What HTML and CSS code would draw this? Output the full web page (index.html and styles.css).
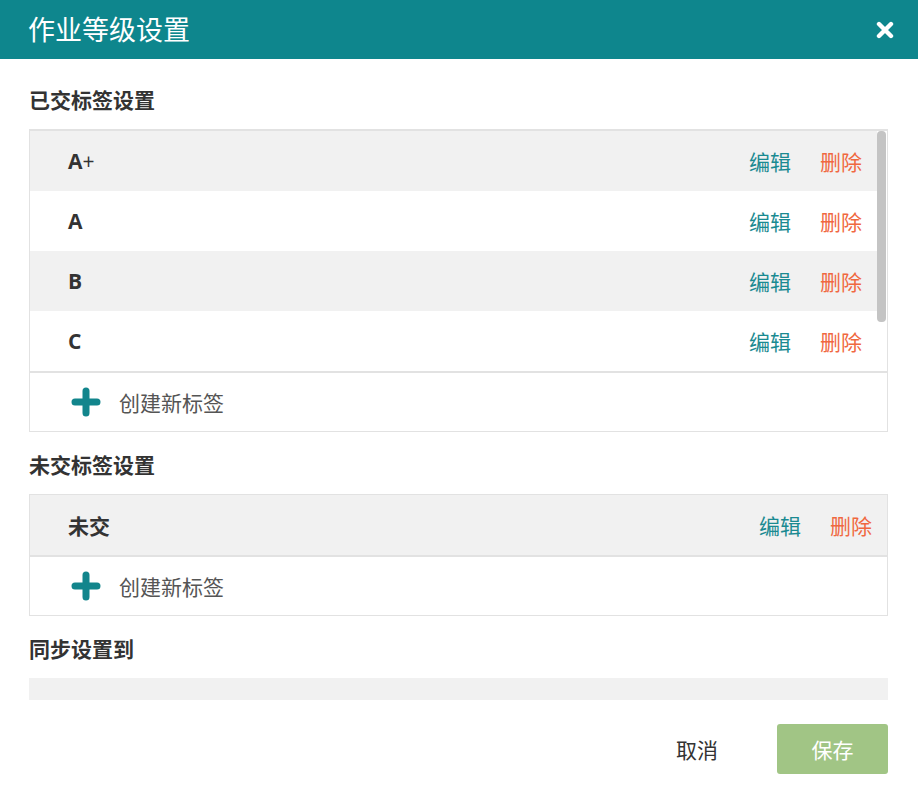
FILE: index.html
```html
<!DOCTYPE html>
<html lang="zh-CN">
<head>
    <meta charset="UTF-8">
    <meta name="viewport" content="width=device-width, initial-scale=1.0">
    <title>作业等级设置</title>
    <link rel="stylesheet" href="styles.css">
</head>
<body>
    <div class="dialog">
        <!-- Header -->
        <div class="dialog-header">
            <h1>作业等级设置</h1>
            <button class="close-button" title="关闭">
                <svg width="18" height="18" viewBox="0 0 18 18">
                    <path d="M3 3 L15 15 M15 3 L3 15" stroke="#fff" stroke-width="4.4" stroke-linecap="round" fill="none"/>
                </svg>
            </button>
        </div>

        <div class="dialog-body">
            <!-- Submitted tags -->
            <h2 class="section-title">已交标签设置</h2>
            <div class="tag-box">
                <div class="scroll-area">
                    <ul class="tag-list">
                        <li class="tag-row"><span class="tag-name">A<span class="plus">+</span></span><a class="edit">编辑</a><a class="delete">删除</a></li>
                        <li class="tag-row"><span class="tag-name">A</span><a class="edit">编辑</a><a class="delete">删除</a></li>
                        <li class="tag-row"><span class="tag-name">B</span><a class="edit">编辑</a><a class="delete">删除</a></li>
                        <li class="tag-row"><span class="tag-name">C</span><a class="edit">编辑</a><a class="delete">删除</a></li>
                    </ul>
                    <div class="scroll-track"><div class="scroll-thumb"></div></div>
                </div>
                <div class="create-row">
                    <svg class="plus-icon" width="30" height="30" viewBox="0 0 30 30">
                        <path d="M15 4 V26 M4 15 H26" stroke="#12858c" stroke-width="7" stroke-linecap="round" fill="none"/>
                    </svg>
                    <span>创建新标签</span>
                </div>
            </div>

            <!-- Not submitted tags -->
            <h2 class="section-title">未交标签设置</h2>
            <div class="tag-box">
                <ul class="tag-list single">
                    <li class="tag-row"><span class="tag-name">未交</span><a class="edit">编辑</a><a class="delete">删除</a></li>
                </ul>
                <div class="create-row">
                    <svg class="plus-icon" width="30" height="30" viewBox="0 0 30 30">
                        <path d="M15 4 V26 M4 15 H26" stroke="#12858c" stroke-width="7" stroke-linecap="round" fill="none"/>
                    </svg>
                    <span>创建新标签</span>
                </div>
            </div>

            <!-- Sync -->
            <h2 class="section-title">同步设置到</h2>
            <div class="sync-box"></div>
        </div>

        <!-- Footer -->
        <div class="dialog-footer">
            <button class="cancel-button">取消</button>
            <button class="save-button">保存</button>
        </div>
    </div>
</body>
</html>
```

FILE: styles.css
```css
* {
    margin: 0;
    padding: 0;
    box-sizing: border-box;
}
body {
    font-family: 'Open Sans', 'Noto Sans CJK SC', sans-serif;
    background-color: #fff;
    color: #333;
}
.dialog {
    width: 918px;
    height: 793px;
    display: flex;
    flex-direction: column;
    overflow: hidden;
}
.dialog-header {
    height: 59px;
    flex-shrink: 0;
    background-color: #0e868d;
    display: flex;
    align-items: center;
    justify-content: space-between;
    padding: 0 24px 0 28px;
}
.dialog-header h1 {
    color: #fff;
    font-size: 27px;
    font-weight: normal;
    line-height: 36px;
}
.close-button {
    background: none;
    border: none;
    cursor: pointer;
    display: flex;
    margin-top: 1px;
}
.dialog-body {
    height: 641px;
    flex-shrink: 0;
    overflow: hidden;
    padding: 0 30px 0 29px;
}
.section-title {
    font-size: 21px;
    font-weight: bold;
    line-height: 30px;
    margin: 18px 0 14px;
}
.section-title:first-child {
    margin-top: 26px;
}
.tag-box {
    border: 1px solid #e2e2e2;
}
.scroll-area {
    display: flex;
    border-top: 1px solid #e2e2e2;
    border-bottom: 2px solid #e2e2e2;
}
.scroll-area .tag-list {
    flex: 1;
}
.scroll-track {
    width: 10px;
    flex-shrink: 0;
}
.scroll-thumb {
    width: 9px;
    height: 191px;
    background-color: #c4c4c4;
    border-radius: 4px;
}
.tag-list {
    list-style: none;
}
.tag-list.single {
    border-bottom: 2px solid #e2e2e2;
}
.tag-row {
    height: 60px;
    display: flex;
    align-items: center;
    padding: 0 15px 0 38px;
    font-size: 21px;
}
.tag-row:nth-child(odd) {
    background-color: #f1f1f1;
}
.tag-name {
    flex: 1;
    font-weight: bold;
    color: #333;
}
.tag-name .plus {
    font-weight: normal;
}
.edit {
    color: #1a8a91;
    cursor: pointer;
}
.delete {
    color: #f0683f;
    margin-left: 29px;
    cursor: pointer;
}
.create-row {
    height: 58px;
    display: flex;
    align-items: center;
    padding-left: 41px;
    font-size: 21px;
    color: #555;
}
.plus-icon {
    margin-right: 18px;
}
.sync-box {
    height: 60px;
    background-color: #f1f1f1;
}
.dialog-footer {
    flex: 1;
    display: flex;
    justify-content: flex-end;
    align-items: flex-start;
    padding: 24px 30px 0 0;
}
.cancel-button {
    background: none;
    border: none;
    width: 100px;
    height: 50px;
    margin-right: 30px;
    font-family: inherit;
    font-size: 21px;
    color: #333;
    cursor: pointer;
}
.save-button {
    background-color: #a1c585;
    border: none;
    border-radius: 3px;
    width: 111px;
    height: 50px;
    font-family: inherit;
    font-size: 21px;
    color: #fff;
    cursor: pointer;
}
```
